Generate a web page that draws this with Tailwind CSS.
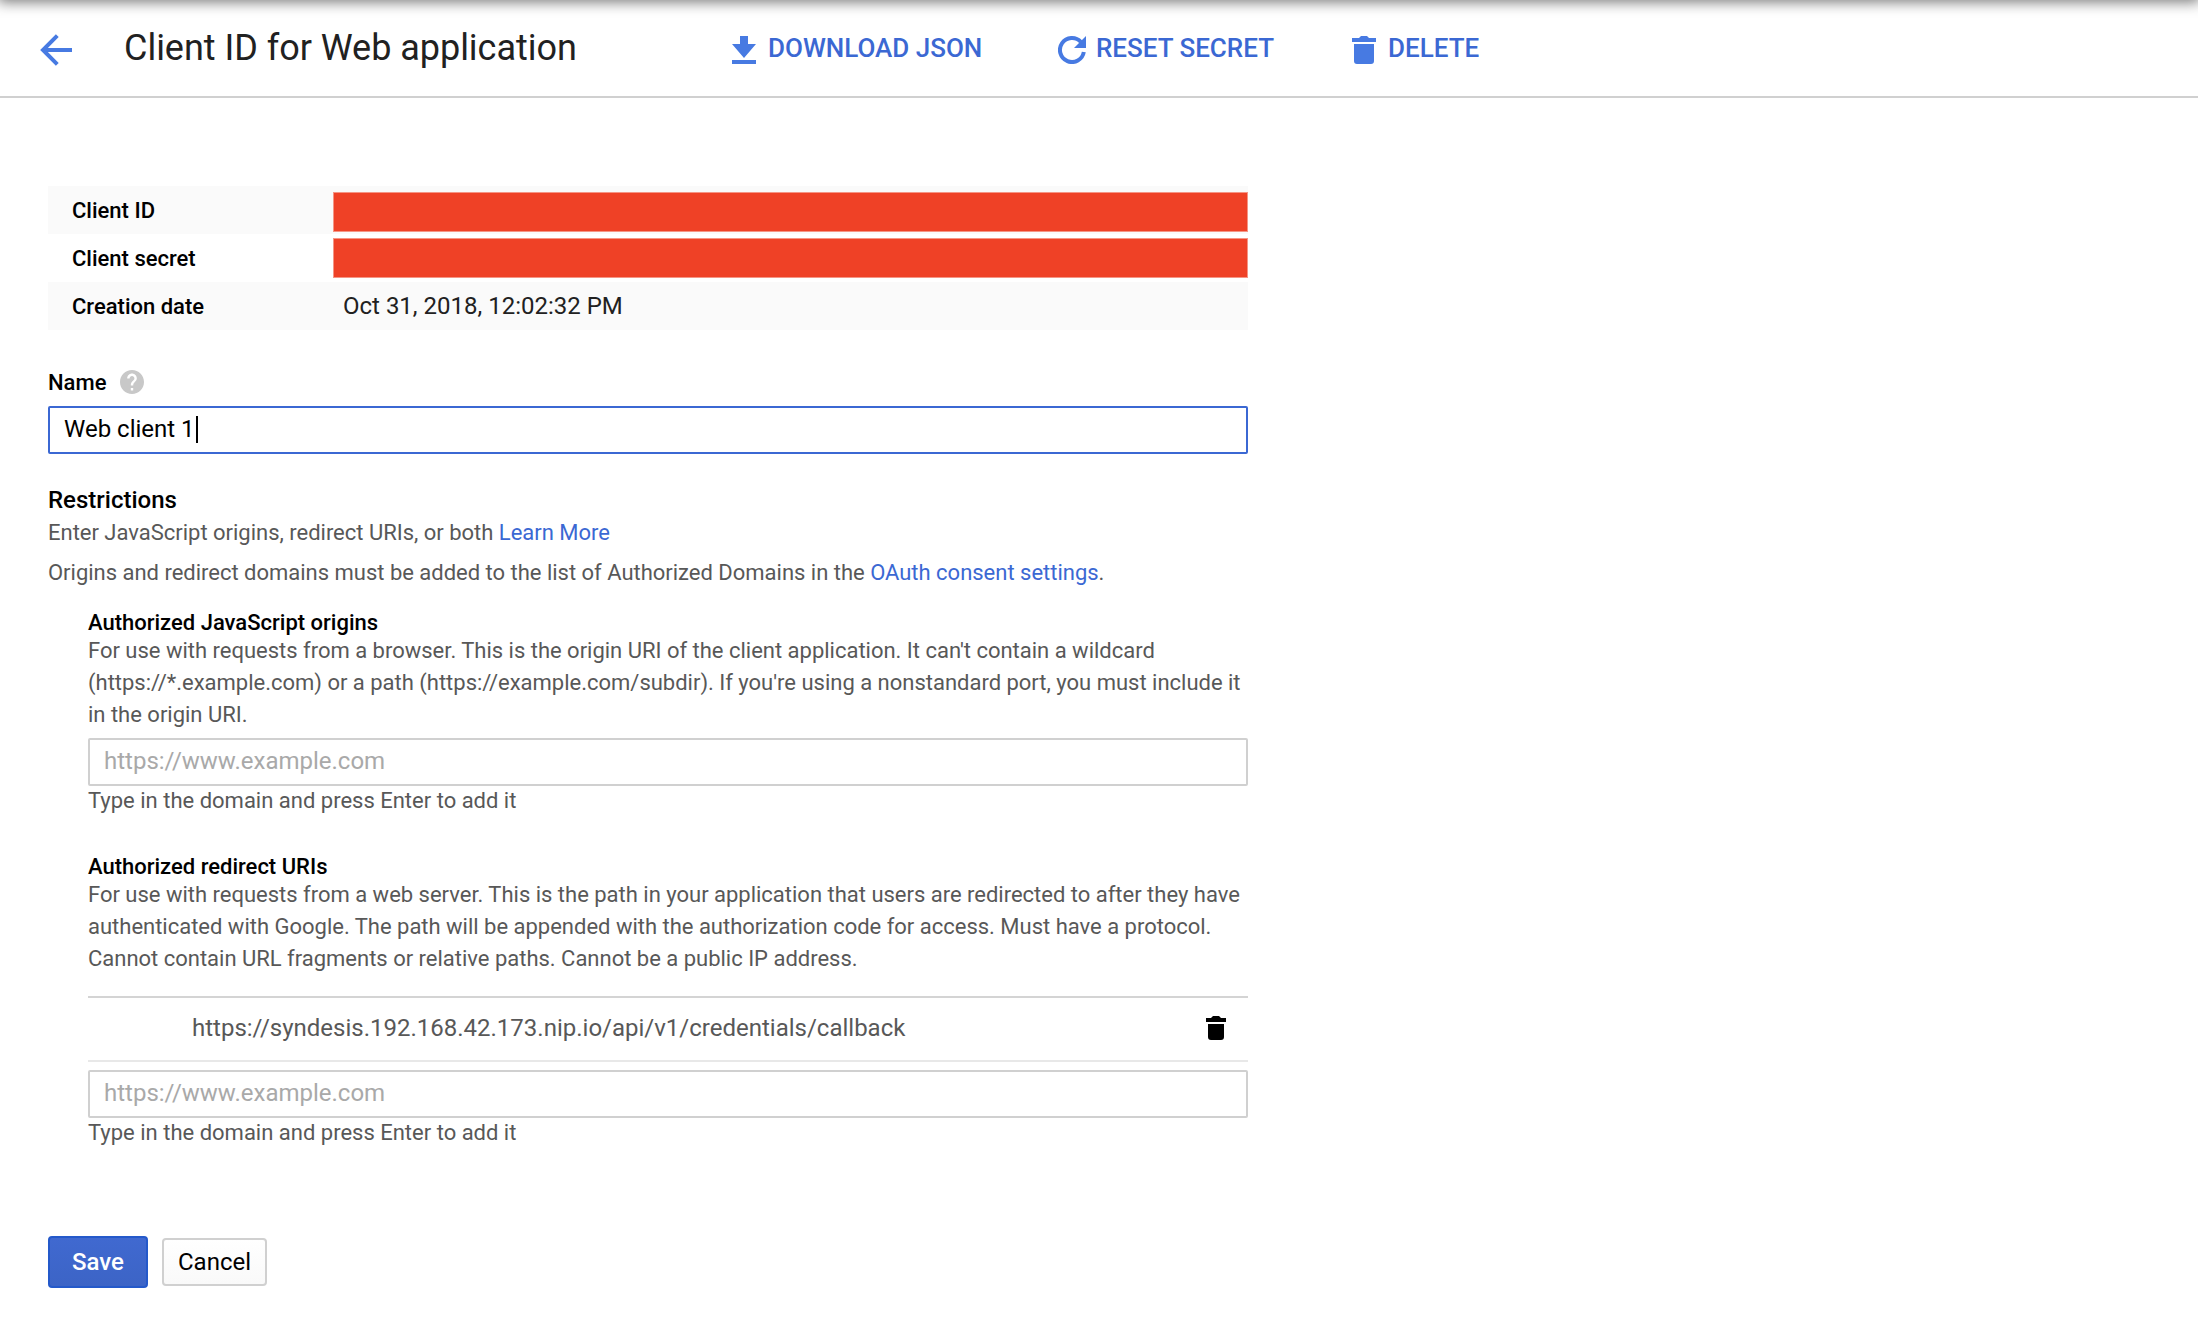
<!DOCTYPE html>
<html lang="en">
<head>
<meta charset="utf-8">
<title>Client ID for Web application</title>
<script src="https://cdn.jsdelivr.net/npm/@tailwindcss/browser@4"></script>
</head>
<body class="relative min-h-screen overflow-x-hidden bg-white font-[Roboto,sans-serif] text-[22px] text-black">
  <!-- shadow cast by the bar above the page -->
  <div class="absolute inset-x-0 -top-10 h-10 shadow-[0_0_14px_2px_rgba(0,0,0,0.54)]"></div>

  <header class="flex h-[98px] items-center border-b-2 border-[#d0d0d0] pl-10">
    <a href="#" aria-label="Back" class="mt-1 mr-[52px]">
      <svg class="block size-8" viewBox="0 0 32 32" fill="none" stroke="#477ae2" stroke-width="4"><path d="M17.3 1.7 3 16l14.3 14.3M3 16h29"/></svg>
    </a>
    <h1 class="w-[608px] text-4xl tracking-[-0.03px] text-[#212121]">Client ID for Web application</h1>
    <button class="flex w-[326px] items-center gap-3 text-[26px] font-medium whitespace-nowrap text-[#3b68d3]">
      <svg class="mt-1 h-7 w-6 shrink-0" viewBox="0 0 24 28" fill="#477ae2"><path d="M8 0h8v8h8L12 22 0 8h8zM0 24h24v4H0z"/></svg>
      DOWNLOAD JSON
    </button>
    <button class="flex w-[294px] items-center gap-2.5 text-[26px] font-medium whitespace-nowrap text-[#3b68d3]">
      <svg class="mt-1 size-7 shrink-0" viewBox="0 0 28 28"><path d="M25.8 16A12 12 0 1 1 22.8 5.9" fill="none" stroke="#477ae2" stroke-width="4"/><path d="M28 0v12H16z" fill="#477ae2"/></svg>
      RESET SECRET
    </button>
    <button class="flex items-center gap-3 text-[26px] font-medium text-[#3b68d3]">
      <svg class="mt-1 h-7 w-6 shrink-0" viewBox="0 0 24 28" fill="#477ae2"><path d="M9 0h6l2 2h7v4H0V2h7zM2 8h20v17a3 3 0 0 1-3 3H5a3 3 0 0 1-3-3z"/></svg>
      DELETE
    </button>
  </header>

  <main class="ml-12 w-[1200px] pt-[88px]">
    <dl>
      <div class="flex h-12 bg-[#fafafa]">
        <dt class="w-[285px] pl-6 leading-[49px] font-medium">Client ID</dt>
        <dd class="mt-1.5 h-10 flex-1 border border-[#f59585] bg-[#ef4126]"></dd>
      </div>
      <div class="flex h-12">
        <dt class="w-[285px] pl-6 leading-[49px] font-medium">Client secret</dt>
        <dd class="mt-1 h-10 flex-1 border border-[#f59585] bg-[#ef4126]"></dd>
      </div>
      <div class="flex h-12 bg-[#fafafa]">
        <dt class="w-[285px] pl-6 leading-[49px] font-medium">Creation date</dt>
        <dd class="pl-2.5 text-2xl leading-[48px] text-[#212121]">Oct 31, 2018, 12:02:32 PM</dd>
      </div>
    </dl>

    <div class="mt-9 flex h-8 items-center">
      <label class="w-[72px] font-medium">Name</label>
      <svg class="size-6" viewBox="2 2 20 20" fill="#c8c8c8"><path d="M12 2C6.48 2 2 6.48 2 12s4.480 10 10 10 10-4.480 10-10S17.520 2 12 2zm1 17h-2v-2h2v2zm2.070-7.750l-.9.920C13.450 12.900 13 13.500 13 15h-2v-.5c0-1.100.450-2.100 1.170-2.830l1.240-1.260c.370-.360.590-.860.590-1.410 0-1.100-.9-2-2-2s-2 .9-2 2H8c0-2.210 1.790-4 4-4s4 1.790 4 4c0 .880-.360 1.680-.930 2.250z"/></svg>
    </div>
    <div class="mt-2 flex h-12 items-center rounded-[2px] border-2 border-[#3b68d3] px-3.5 pb-0.5 text-2xl leading-7">
      <span>Web client 1</span><span class="ml-px h-[27px] w-0.5 bg-black"></span>
    </div>

    <h2 class="mt-[30px] text-2xl leading-8 font-medium">Restrictions</h2>
    <p class="mt-px leading-8 tracking-[-0.012px] text-[#585858]">Enter JavaScript origins, redirect URIs, or both <a href="#" class="text-[#3b68d3]">Learn More</a></p>
    <p class="mt-2 leading-8 tracking-[-0.012px] text-[#585858]">Origins and redirect domains must be added to the list of Authorized Domains in the <a href="#" class="text-[#3b68d3]">OAuth consent settings</a>.</p>

    <section class="mt-[22px] pl-10">
      <h3 class="leading-6 font-medium">Authorized JavaScript origins</h3>
      <p class="leading-8 tracking-[-0.008px] whitespace-nowrap text-[#585858]">For use with requests from a browser. This is the origin URI of the client application. It can't contain a wildcard<br>(https://*.example.com) or a path (https://example.com/subdir). If you're using a nonstandard port, you must include it<br>in the origin URI.</p>
      <div class="mt-[7px] flex h-12 items-center rounded-[2px] border-2 border-[#d0d0d0] px-3.5 pb-0.5 text-2xl leading-7 text-[#a9a9a9]">https://www.example.com</div>
      <p class="mt-px leading-7 text-[#585858]">Type in the domain and press Enter to add it</p>
    </section>

    <section class="mt-10 pl-10">
      <h3 class="leading-6 font-medium">Authorized redirect URIs</h3>
      <p class="leading-8 tracking-[-0.008px] whitespace-nowrap text-[#585858]">For use with requests from a web server. This is the path in your application that users are redirected to after they have<br>authenticated with Google. The path will be appended with the authorization code for access. Must have a protocol.<br>Cannot contain URL fragments or relative paths. Cannot be a public IP address.</p>
      <div class="mt-[21px] flex h-[66px] items-center justify-between border-t-2 border-b-2 border-t-[#d4d4d4] border-b-[#e8e8e8] pr-[22px] pb-0.5 pl-[104px]">
        <span class="text-2xl leading-7 text-[#585858]">https://syndesis.192.168.42.173.nip.io/api/v1/credentials/callback</span>
        <svg class="h-6 w-5" viewBox="0 0 20 24" fill="#000"><path d="M7 0h6l2 2h5v4H0V2h5zM2 8h16v13a3 3 0 0 1-3 3H5a3 3 0 0 1-3-3z"/></svg>
      </div>
      <div class="mt-2 flex h-12 items-center rounded-[2px] border-2 border-[#d0d0d0] px-3.5 pb-0.5 text-2xl leading-7 text-[#a9a9a9]">https://www.example.com</div>
      <p class="mt-px leading-7 text-[#585858]">Type in the domain and press Enter to add it</p>
    </section>

    <div class="mt-[89px] flex items-center gap-3.5">
      <button class="h-[52px] w-[100px] rounded-[4px] border-2 border-[#2459ca] bg-linear-to-b from-[#4069d0] to-[#3c64c6] text-2xl leading-7 font-medium text-white">Save</button>
      <button class="h-12 w-[105px] rounded-[4px] border-2 border-[#d0d0d0] bg-linear-to-b from-white to-[#f9f9f9] text-2xl leading-7">Cancel</button>
    </div>
  </main>
</body>
</html>
